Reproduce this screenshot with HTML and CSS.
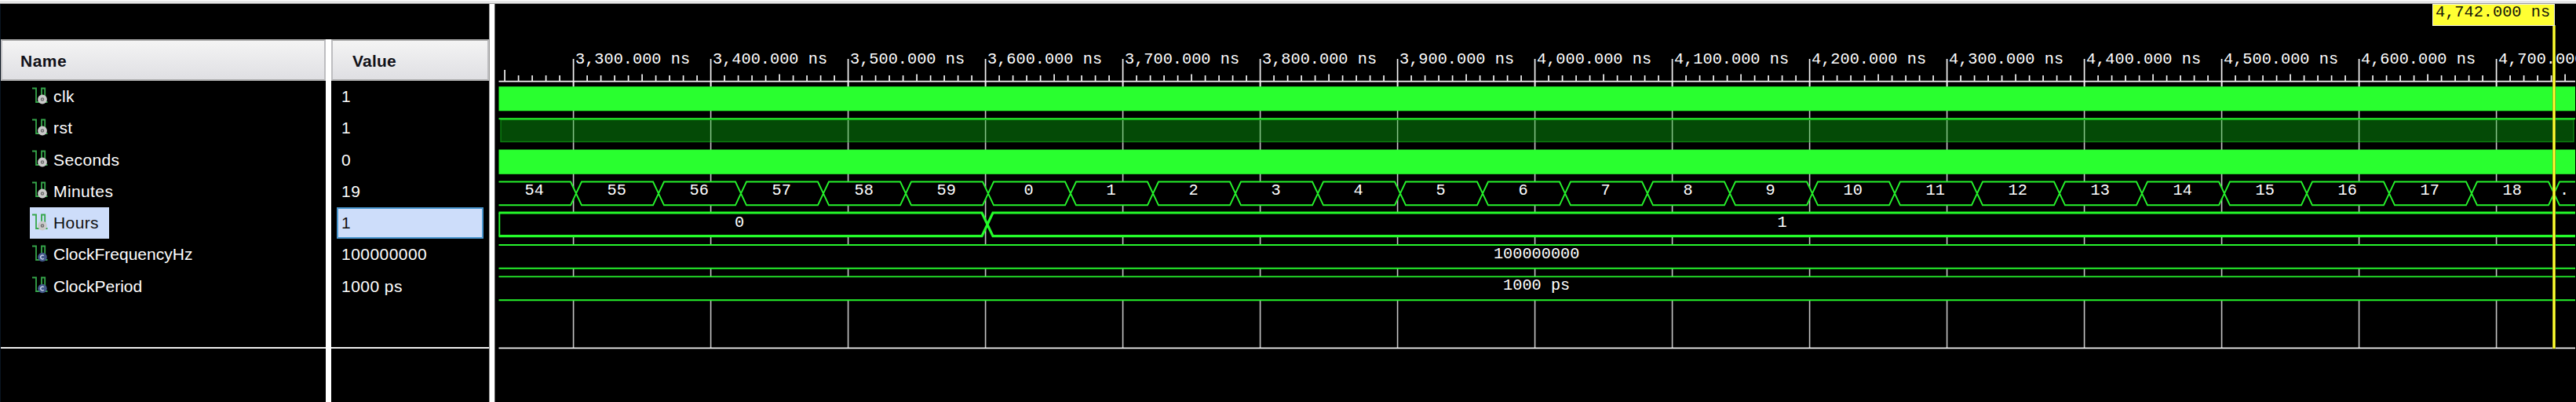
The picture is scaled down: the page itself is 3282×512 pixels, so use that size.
FILE: index.html
```html
<!DOCTYPE html>
<html lang="en">
<head>
<meta charset="utf-8">
<title>Waveform</title>
<link rel="stylesheet" href="styles.css">
</head>
<body>
<svg class="defs" width="0" height="0" aria-hidden="true">
  <symbol id="sig" viewBox="0 0 22 22">
    <path d="M1 1.500H6V19H13V1.500H17.200V19H20.500" fill="none" stroke="#35a64a" stroke-width="1.800"/>
  </symbol>
  <symbol id="reg" viewBox="0 0 22 22">
    <use href="#sig"/>
    <circle cx="14" cy="15.500" r="4.100" fill="#6a6a6a" stroke="#cacaca" stroke-width="3.600"/>
    <circle cx="14" cy="15.500" r="1" fill="#bbb"/>
  </symbol>
  <symbol id="const" viewBox="0 0 22 22">
    <use href="#sig"/>
    <circle cx="14" cy="15.500" r="5.800" fill="#42588a"/>
    <path d="M15.800 13.800A2.400 2.400 0 1 0 15.800 17.200" fill="none" stroke="#c3cde2" stroke-width="1.500"/>
  </symbol>
</svg>
<div class="window">
  <div class="topbar"></div>
  <div class="main">
    <div class="lists">
      <div class="column names">
        <div class="head">Name</div>
        <div class="rows">
          <div class="row"><span class="item"><svg class="icon"><use href="#reg"/></svg><span>clk</span></span></div>
          <div class="row"><span class="item"><svg class="icon"><use href="#reg"/></svg><span>rst</span></span></div>
          <div class="row"><span class="item"><svg class="icon"><use href="#reg"/></svg><span>Seconds</span></span></div>
          <div class="row"><span class="item"><svg class="icon"><use href="#reg"/></svg><span>Minutes</span></span></div>
          <div class="row"><span class="item selected"><svg class="icon"><use href="#reg"/></svg><span>Hours</span></span></div>
          <div class="row"><span class="item"><svg class="icon"><use href="#const"/></svg><span class="tight">ClockFrequencyHz</span></span></div>
          <div class="row"><span class="item"><svg class="icon"><use href="#const"/></svg><span class="tight">ClockPeriod</span></span></div>
        </div>
      </div>
      <div class="splitter"></div>
      <div class="column values">
        <div class="head">Value</div>
        <div class="rows">
          <div class="row"><span class="cell">1</span></div>
          <div class="row"><span class="cell">1</span></div>
          <div class="row"><span class="cell">0</span></div>
          <div class="row"><span class="cell">19</span></div>
          <div class="row"><span class="cell selected">1</span></div>
          <div class="row"><span class="cell">100000000</span></div>
          <div class="row"><span class="cell">1000 ps</span></div>
        </div>
      </div>
    </div>
    <div class="splitter outer"></div>
    <div class="wave">
      <svg id="wave" viewBox="631 5 2651 507" width="2651" height="507"></svg>
      <div class="cursor"></div>
      <div class="flag">4,742.000 ns</div>
    </div>
  </div>
</div>
<script src="wave.js"></script>
</body>
</html>
```
FILE: styles.css
```css
* { box-sizing: border-box; }
body { margin: 0; background: #000; font-family: "Liberation Sans", Arial, sans-serif; }
.defs { position: absolute; }
.window { width: 3282px; height: 512px; display: flex; flex-direction: column; overflow: hidden; background: #000; }
.topbar { height: 5px; flex: none; background: linear-gradient(#fff 0 1px, #e6e6e6 1px 4px, #a0a0a0 4px); }
.main { display: flex; height: 507px; }
.lists { display: flex; width: 623px; padding-top: 45px; border-left: 1px solid #0a1420; }
.column { display: flex; flex-direction: column; }
.names { width: 414px; }
.values { width: 201px; }
.splitter { width: 7px; flex: none; background: #fff; }
.outer { width: 8px; border-left: 1px solid #999; border-right: 1px solid #555; }
.head { height: 53px; flex: none; border: 2px solid #bdbdc0; border-top-color: #aaa; border-bottom-color: #aaa; background: linear-gradient(#f4f4f4, #dfdfe3); color: #111118; font-size: 21px; font-weight: bold; line-height: 52px; padding-left: 23px; letter-spacing: .5px; }
.values .head { padding-left: 25px; letter-spacing: .2px; }
.rows { height: 341px; flex: none; border-bottom: 2px solid #eee; }
.row { height: 40.280px; display: flex; }
.item { display: flex; align-items: center; gap: 6px; height: 40.280px; margin-left: 37px; padding: 0 13px 0 2px; color: #fff; font-size: 21px; letter-spacing: .4px; }
.item .tight { letter-spacing: 0; }
.item.selected, .cell.selected { background: #cdddfa; color: #111; }
.icon { width: 22px; height: 22px; flex: none; margin-top: -3px; }
.cell { display: flex; align-items: center; height: 40.280px; width: 187px; margin-left: 7px; padding-left: 5px; border: 1px solid transparent; color: #fff; font-size: 21px; letter-spacing: .45px; }
.cell.selected { border: 2px solid #4a97cf; padding-left: 4px; }
.wave { position: relative; width: 2651px; height: 507px; }
.wave svg { display: block; }
.grid { stroke: #c4c4c4; stroke-width: 1.600; }
.tick { stroke: #f4f4f4; stroke-width: 1.700; }
.solid { fill: #29ff2f; }
.shade { fill: #044a06; stroke: #0c7d10; stroke-width: 1.500; }
.shade-grid { stroke: #86c488; stroke-width: 1.500; }
.trace { fill: none; stroke: #26f42c; stroke-width: 1.900; }
.thick { stroke: #24fc2a; stroke-width: 3.200; }
.mask { fill: #000; }
.txt { fill: #fff; font: 20.300px "Liberation Mono", monospace; white-space: pre; }
.mid { text-anchor: middle; }
.cursor { position: absolute; left: 2620.500px; top: 27px; width: 4px; height: 412px; background: #ffff30; border: solid #b5b51c; border-width: 0 1px; }
.flag { position: absolute; left: 2468px; top: 0; width: 156px; height: 28px; border: 1px solid #f0f0e0; background: #ffff33; color: #15150a; font: 20.300px/20px "Liberation Mono", monospace; padding-left: 3px; white-space: pre; }
```
FILE: wave.js
```js
const svg = document.getElementById("wave");
const parts = [];
const timeX = (t) => 730.6 + (t - 3300) * 1.75;
const line = (cls, x1, y1, x2, y2) =>
  parts.push(`<line class="${cls}" x1="${x1}" y1="${y1}" x2="${x2}" y2="${y2}"/>`);
const rect = (cls, x, y, w, h) =>
  parts.push(`<rect class="${cls}" x="${x}" y="${y}" width="${w}" height="${h}"/>`);
const text = (cls, x, y, s) =>
  parts.push(`<text class="txt ${cls}" x="${x}" y="${y}">${s}</text>`);
const LEFT = 635.5, RIGHT = 3281;

// Vertical grid, ruler ticks and time labels
for (let t = 3300; t <= 4700; t += 100) {
  line("grid", timeX(t), 104, timeX(t), 443);
  line("tick", timeX(t), 75, timeX(t), 110);
  text("", timeX(t) + 2.4, 80.5, `${String(t).replace(/^(\d)/, "$1,")}.000 ns`);
}
for (let t = 3250; t <= 4750; t += 10) {
  if (t % 100) line("tick", timeX(t), t === 3250 ? 89 : t % 50 ? 96 : 94.5, timeX(t), 103);
}
line("tick", LEFT, 103.7, RIGHT, 103.7);

// Single-bit signals
rect("solid", LEFT, 110.2, RIGHT - LEFT, 31.1);
rect("shade", 638, 152.5, 2641, 28);
for (let t = 3300; t <= 4700; t += 100) {
  line("shade-grid", timeX(t), 153, timeX(t), 181);
}
line("trace", LEFT, 151.3, RIGHT, 151.3);
rect("solid", LEFT, 190.5, RIGHT - LEFT, 31.3);

// Bus segments between consecutive transition centres
function bus(y1, y2, cuts, cls) {
  const edges = [null, ...cuts, null];
  for (let i = 0; i < edges.length - 1; i++) {
    const a = edges[i], b = edges[i + 1], m = (y1 + y2) / 2;
    const l = a === null ? LEFT : a, r = b === null ? RIGHT : b;
    const la = a === null ? LEFT : a + 7, rb = b === null ? RIGHT : b - 7;
    const top = `${l},${a === null ? y1 : m} ${la},${y1} ${rb},${y1} ${r},${b === null ? y1 : m}`;
    const bottom = `${l},${a === null ? y2 : m} ${la},${y2} ${rb},${y2} ${r},${b === null ? y2 : m}`;
    parts.push(`<polygon class="mask" points="${top} ${bottom.split(" ").reverse().join(" ")}"/>`);
    parts.push(`<polyline class="${cls}" points="${top}"/><polyline class="${cls}" points="${bottom}"/>`);
  }
}
const minutes = Array.from({ length: 25 }, (_, i) => 734 + i * 105);
bus(231.5, 261.3, minutes, "trace");
text("mid", 680.7, 248.3, "54");
minutes.slice(0, 24).forEach((x, i) => text("mid", x + 51.7, 248.3, (55 + i) % 60));
text("mid", 3267, 248.3, ".");

bus(271, 300.7, [1258], "trace thick");
line("trace", 636.3, 271, 636.3, 300.7);
text("mid", 942, 288.9, "0");
text("mid", 2270.5, 288.9, "1");

bus(312, 341.7, [], "trace");
text("mid", 1957.7, 329, "100000000");
bus(352.4, 382.2, [], "trace");
text("mid", 1957.7, 369.3, "1000 ps");

line("tick", LEFT, 443.4, RIGHT, 443.4);
svg.innerHTML = parts.join("");
```
